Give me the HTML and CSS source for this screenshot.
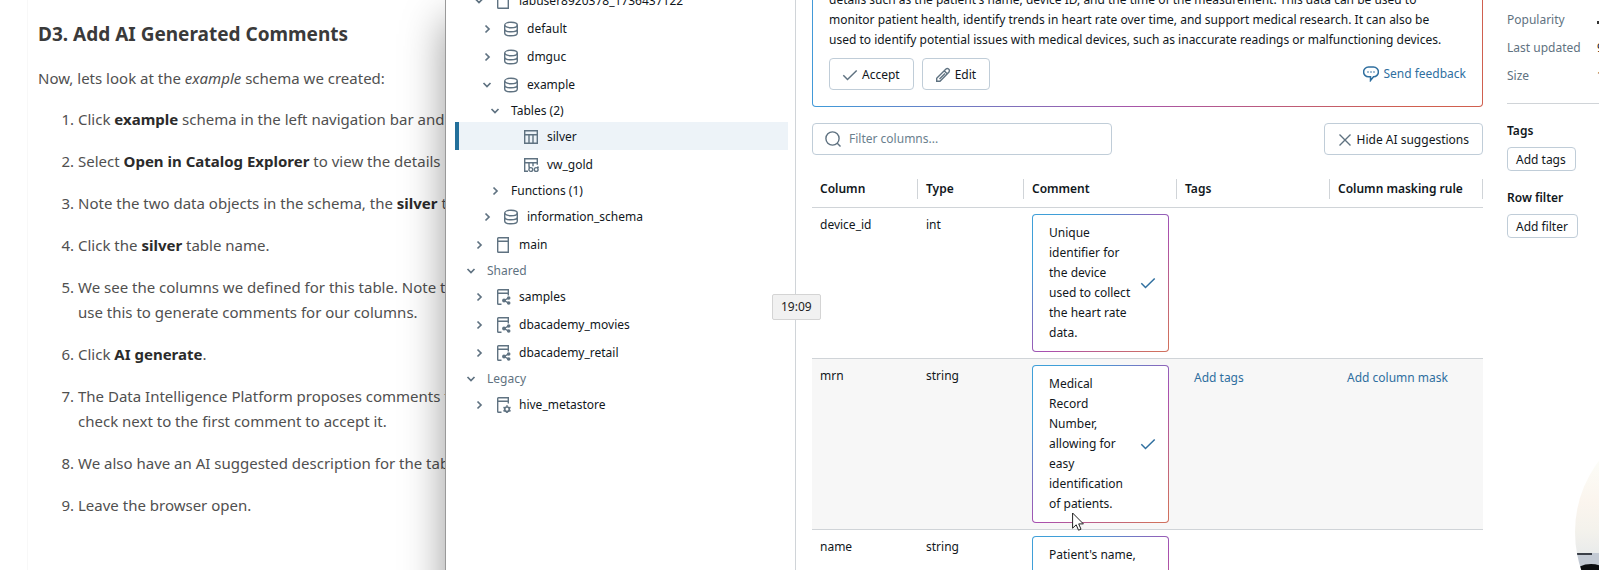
FILE: index.html
```html
<!DOCTYPE html>
<html lang="en">
<head>
<meta charset="utf-8">
<title>Add AI Generated Comments</title>
<link rel="stylesheet" href="styles.css">
</head>
<body>
<svg class="sprite" aria-hidden="true">
  <symbol id="i-right" viewBox="0 0 16 16"><path d="M6.500 4.500L10 8l-3.500 3.500" fill="none" stroke="currentColor" stroke-width="1.700"/></symbol>
  <symbol id="i-down" viewBox="0 0 16 16"><path d="M4.500 6L8 9.500 11.500 6" fill="none" stroke="currentColor" stroke-width="1.700"/></symbol>
  <symbol id="i-db" viewBox="0 0 16 16"><g fill="none" stroke="currentColor" stroke-width="1.400"><ellipse cx="8" cy="4" rx="6.300" ry="2.800"/><path d="M1.700 4v8c0 1.600 2.800 2.800 6.300 2.800s6.300-1.200 6.300-2.800V4M1.700 8c0 1.600 2.800 2.800 6.300 2.800s6.300-1.200 6.300-2.800"/></g></symbol>
  <symbol id="i-cat" viewBox="0 0 16 16"><path d="M2.700 1.500q0-.8.8-.8h9.800v14.600H3.500q-.8 0-.8-.8zM2.700 4.200h10.600" fill="none" stroke="currentColor" stroke-width="1.400"/></symbol>
  <symbol id="i-share" viewBox="0 0 16 16"><path d="M6.500 15.300H3.500q-.8 0-.8-.8v-13q0-.8.8-.8h9.800v5.800M2.700 4.200h10.600M9 11.500l4.300-2.300M9 11.500l4.300 2.300" fill="none" stroke="currentColor" stroke-width="1.400"/><g fill="currentColor"><circle cx="9" cy="11.500" r="1.900"/><circle cx="13.700" cy="9" r="1.800"/><circle cx="13.700" cy="14" r="1.800"/></g></symbol>
  <symbol id="i-gear" viewBox="0 0 16 16"><path d="M6.500 15.300H3.500q-.8 0-.8-.8v-13q0-.8.8-.8h9.800v5.800M2.700 4.200h10.600" fill="none" stroke="currentColor" stroke-width="1.400"/><circle cx="12" cy="12.300" r="2.300" fill="none" stroke="currentColor" stroke-width="1.700"/><path d="M12 8.300v1.500M12 14.800v1.500M8.500 10.300l1.300.8M14.200 13.500l1.300.8M8.500 14.300l1.300-.8M14.200 11.100l1.300-.8" stroke="currentColor" stroke-width="1.600"/></symbol>
  <symbol id="i-table" viewBox="0 0 16 16"><path d="M1.700 1.700h12.600v12.600H1.700zM1.700 5.700h12.600M6 5.700v8.600M10 5.700v8.600" fill="none" stroke="currentColor" stroke-width="1.400"/></symbol>
  <symbol id="i-view" viewBox="0 0 16 16"><g fill="none" stroke="currentColor" stroke-width="1.400"><path d="M5 14.300H1.700V1.700h12.600v6M1.700 5.700h12.600M6 5.700v4M10 5.700v3.500M5.500 10.200h1.500M14 10.200h1.800"/><circle cx="7.800" cy="12.500" r="1.900"/><circle cx="13.200" cy="12.500" r="1.900"/></g></symbol>
  <symbol id="i-check" viewBox="0 0 16 16"><path d="M1.300 8.300l4.200 4.200L14.700 3.500" fill="none" stroke="currentColor" stroke-width="1.500"/></symbol>
  <symbol id="i-pencil" viewBox="0 0 16 16"><path d="M1.700 14.300v-3L11 2q1.200-1.200 2.600 0t.4 3L5 14.300zM9.200 3.800l3 3M4.500 12L10 6.500" fill="none" stroke="currentColor" stroke-width="1.400"/></symbol>
  <symbol id="i-close" viewBox="0 0 16 16"><path d="M2.500 2.500l11 11M13.500 2.500l-11 11" stroke="currentColor" stroke-width="1.400"/></symbol>
  <symbol id="i-search" viewBox="0 0 16 16"><circle cx="7.500" cy="7.500" r="6.600" fill="none" stroke="currentColor" stroke-width="1.400"/><path d="M12 12l3.500 3.500" stroke="currentColor" stroke-width="1.400"/></symbol>
  <symbol id="i-bubble" viewBox="0 0 16 16"><path d="M5.500 1h5a4.800 4.800 0 010 9.800L7.500 14.500v-3.700h-2a4.800 4.800 0 010-9.800z" fill="none" stroke="currentColor" stroke-width="1.500"/><g fill="currentColor"><circle cx="5" cy="6" r=".8"/><circle cx="8" cy="6" r=".8"/><circle cx="11" cy="6" r=".8"/></g></symbol>
</svg>

<div class="screen">
  <article class="lesson">
    <h2>D3. Add AI Generated Comments</h2>
    <p>Now, lets look at the <em>example</em> schema we created:</p>
    <ol>
      <li>Click <strong>example</strong> schema in the left navigation bar and</li>
      <li>Select <strong>Open in Catalog Explorer</strong> to view the details</li>
      <li>Note the two data objects in the schema, the <strong>silver</strong> table</li>
      <li>Click the <strong>silver</strong> table name.</li>
      <li>We see the columns we defined for this table. Note the<br>use this to generate comments for our columns.</li>
      <li>Click <strong>AI generate</strong>.</li>
      <li>The Data Intelligence Platform proposes comments for<br>check next to the first comment to accept it.</li>
      <li>We also have an AI suggested description for the table</li>
      <li>Leave the browser open.</li>
    </ol>
  </article>

  <div class="window">
    <nav class="tree" aria-label="Catalog">
      <ul>
        <li class="row catalog"><svg><use href="#i-down"/></svg><svg><use href="#i-cat"/></svg>labuser8920378_1736437122</li>
        <li class="row schema"><svg><use href="#i-right"/></svg><svg><use href="#i-db"/></svg>default</li>
        <li class="row schema"><svg><use href="#i-right"/></svg><svg><use href="#i-db"/></svg>dmguc</li>
        <li class="row schema"><svg><use href="#i-down"/></svg><svg><use href="#i-db"/></svg>example</li>
        <li class="row folder"><svg><use href="#i-down"/></svg>Tables (2)</li>
        <li class="row item selected"><svg><use href="#i-table"/></svg>silver</li>
        <li class="row item"><svg><use href="#i-view"/></svg>vw_gold</li>
        <li class="row folder"><svg><use href="#i-right"/></svg>Functions (1)</li>
        <li class="row schema"><svg><use href="#i-right"/></svg><svg><use href="#i-db"/></svg>information_schema</li>
        <li class="row catalog"><svg><use href="#i-right"/></svg><svg><use href="#i-cat"/></svg>main</li>
        <li class="row section"><svg><use href="#i-down"/></svg>Shared</li>
        <li class="row catalog"><svg><use href="#i-right"/></svg><svg><use href="#i-share"/></svg>samples</li>
        <li class="row catalog"><svg><use href="#i-right"/></svg><svg><use href="#i-share"/></svg>dbacademy_movies</li>
        <li class="row catalog"><svg><use href="#i-right"/></svg><svg><use href="#i-share"/></svg>dbacademy_retail</li>
        <li class="row section"><svg><use href="#i-down"/></svg>Legacy</li>
        <li class="row catalog"><svg><use href="#i-right"/></svg><svg><use href="#i-gear"/></svg>hive_metastore</li>
      </ul>
    </nav>

    <main>
      <section class="suggestion">
        <p>details such as the patient's name, device ID, and the time of the measurement. This data can be used to<br>monitor patient health, identify trends in heart rate over time, and support medical research. It can also be<br>used to identify potential issues with medical devices, such as inaccurate readings or malfunctioning devices.</p>
        <div class="actions">
          <button class="btn"><svg><use href="#i-check"/></svg>Accept</button>
          <button class="btn"><svg><use href="#i-pencil"/></svg>Edit</button>
          <a class="feedback" href="#"><svg><use href="#i-bubble"/></svg>Send feedback</a>
        </div>
      </section>
      <div class="toolbar">
        <label class="filter"><svg><use href="#i-search"/></svg><input type="text" placeholder="Filter columns..." aria-label="Filter columns"></label>
        <button class="btn"><svg><use href="#i-close"/></svg>Hide AI suggestions</button>
      </div>
      <table>
        <colgroup><col class="c-narrow"><col class="c-narrow"><col><col><col></colgroup>
        <thead>
          <tr><th><span>Column</span></th><th><span>Type</span></th><th><span>Comment</span></th><th><span>Tags</span></th><th><span>Column masking rule</span></th></tr>
        </thead>
        <tbody>
          <tr><td>device_id</td><td>int</td><td class="cell-comment"><div class="comment"><p>Unique<br>identifier for<br>the device<br>used to collect<br>the heart rate<br>data.</p><button aria-label="Accept comment"><svg><use href="#i-check"/></svg></button></div></td><td></td><td></td></tr>
          <tr class="hover"><td>mrn</td><td>string</td><td class="cell-comment"><div class="comment"><p>Medical<br>Record<br>Number,<br>allowing for<br>easy<br>identification<br>of patients.</p><button aria-label="Accept comment"><svg><use href="#i-check"/></svg></button></div></td><td class="cell-link"><a href="#">Add tags</a></td><td class="cell-link"><a href="#">Add column mask</a></td></tr>
          <tr><td>name</td><td>string</td><td class="cell-comment"><div class="comment tall"><p>Patient's name,</p><button aria-label="Accept comment"><svg><use href="#i-check"/></svg></button></div></td><td></td><td></td></tr>
        </tbody>
      </table>
    </main>

    <aside>
      <dl>
        <dt>Popularity</dt><dd><i class="bars"></i></dd>
        <dt>Last updated</dt><dd>9</dd>
        <dt>Size</dt><dd>1</dd>
      </dl>
      <h3>Tags</h3>
      <button class="btn small">Add tags</button>
      <h3>Row filter</h3>
      <button class="btn small">Add filter</button>
    </aside>
  </div>

  <div class="timestamp">19:09</div>
  <svg class="cursor" viewBox="0 0 12 19"><path d="M.600 1v15.200l3.600-3.400 2.300 5.400 2.500-1-2.300-5.300h4.700z" fill="#fff" stroke="#222" stroke-width="1"/></svg>
  <svg class="webcam" viewBox="0 0 24 112">
    <defs>
      <clipPath id="lens"><circle cx="118" cy="74" r="118"/></clipPath>
      <linearGradient id="wall" x1="0" y1="0" x2="0" y2="1"><stop offset="0" stop-color="#fcfdf8"/><stop offset=".45" stop-color="#fbf5ee"/><stop offset=".75" stop-color="#f4f2ec"/><stop offset="1" stop-color="#e9ebeb"/></linearGradient>
    </defs>
    <g clip-path="url(#lens)"><rect width="24" height="96" fill="url(#wall)"/><path d="M0 95h24v17H0z" fill="#c3cad4"/><path d="M0 95h17v2H0z" fill="#3a3f48"/><ellipse cx="16" cy="114" rx="15" ry="8" fill="#0b0d10"/></g>
  </svg>
</div>
</body>
</html>
```
FILE: styles.css
```css
* { box-sizing: border-box; }

body {
  margin: 0;
  font-family: "Noto Sans", "Open Sans", sans-serif;
  font-size: 12px;
  line-height: 20px;
  color: #11171c;
  background: #fff;
}

ul, ol, dl, dd, p, h2, h3 { margin: 0; padding: 0; }
svg { width: 16px; height: 16px; flex: none; color: #5f7281; }
.sprite { display: none; }
a { color: #2f6f9f; text-decoration: none; }
button, input { font: inherit; color: inherit; }

.screen {
  position: relative;
  display: grid;
  grid-template-columns: 445px minmax(0, 1fr);
  height: 100vh;
  overflow: hidden;
}

/* Lesson text */
.lesson {
  margin-left: 27px;
  padding: 18px 0 0 10px;
  border-left: 1px solid #f8f8f8;
  font-size: 15px;
  line-height: 25px;
  color: #505050;
  white-space: nowrap;
}
.lesson h2 { font-size: 19px; line-height: 32px; font-weight: 700; color: #3a3a3a; }
.lesson p { margin: 16px 0; }
.lesson ol { padding-left: 40px; }
.lesson li { margin-bottom: 17px; }
.lesson strong { font-weight: 700; color: #2b2b2b; }

/* Browser window */
.window {
  position: relative;
  display: grid;
  grid-template-columns: 350px minmax(0, 1fr) 92px;
  background: #fff;
  border-left: 1px solid #999;
  box-shadow: 0 20px 40px rgba(0, 0, 0, .4);
}

.tree {
  padding: 0 7px 0 9px;
  border-right: 1px solid #d0d4d8;
}
.tree ul { margin-top: -14px; list-style: none; }
.row { display: flex; align-items: center; gap: 8px; height: 28px; padding-top: 1px; }
.catalog { padding-left: 16px; }
.schema { padding-left: 24px; }
.item { padding-left: 68px; }
.folder { padding-left: 32px; height: 24px; }
.section { padding-left: 8px; height: 24px; color: #5f7281; }
.selected { padding-left: 64px; border-left: 4px solid #23709b; background: #edf3f8; }

main { padding: 0 24px 0 16px; overflow: hidden; }

.suggestion {
  margin-top: -27px;
  padding: 16px;
  border: 1px solid transparent;
  border-radius: 4px;
  background:
    linear-gradient(#fff, #fff) padding-box,
    linear-gradient(100deg, #4299d8 5%, #a855a8 50%, #d0604f 90%) border-box;
}
.suggestion p { white-space: nowrap; }
.actions { display: flex; gap: 8px; margin-top: 8px; align-items: center; }
.feedback { display: flex; align-items: center; gap: 4px; margin-left: auto; }
.feedback svg { color: inherit; }

.btn {
  display: inline-flex;
  align-items: center;
  gap: 4px;
  height: 32px;
  padding: 1px 13px 0 12px;
  border: 1px solid #c0cdd8;
  border-radius: 4px;
  background: #fff;
  white-space: nowrap;
}
.small { height: 24px; padding: 1px 9px 0 8px; }

.toolbar { display: flex; justify-content: space-between; margin: 16px 0; }
.filter {
  display: flex;
  align-items: center;
  gap: 8px;
  width: 300px;
  height: 32px;
  padding: 0 12px;
  border: 1px solid #c0cdd8;
  border-radius: 4px;
}
.filter input { flex: 1; min-width: 0; padding: 0; border: 0; outline: 0; background: none; }
.filter input::placeholder { color: #6b7f8e; }

table { width: 100%; border-collapse: separate; border-spacing: 0; table-layout: fixed; }
.c-narrow { width: 106px; }
th { height: 37px; padding: 0; border-bottom: 1px solid #d0d4d8; text-align: left; font-weight: 600; white-space: nowrap; }
th span { display: block; padding-left: 8px; border-right: 1px solid #d0d4d8; }
td { padding: 7px 8px; border-bottom: 1px solid #d0d4d8; vertical-align: top; }
.cell-comment { padding: 6px 8px; }
.cell-link { padding: 9px 8px 8px 17px; }
.hover { background: #f7f7f7; }

.comment {
  display: flex;
  align-items: center;
  gap: 2px;
  padding: 8px 12px 8px 16px;
  border: 1px solid transparent;
  border-radius: 4px;
  background:
    linear-gradient(#fff, #fff) padding-box,
    linear-gradient(135deg, #3f9fd8 20%, #a94fb0 55%, #d0705f 95%) border-box;
}
.comment p { flex: 1; min-width: 0; white-space: nowrap; }
.comment button { display: flex; padding: 0; border: 0; background: none; }
.comment svg { color: #2f6f9f; }
.tall p { min-height: 120px; }

aside { overflow: hidden; }
dl {
  display: grid;
  grid-template-columns: 82px 40px;
  gap: 8px;
  width: 130px;
  padding: 10px 0 17px;
  border-bottom: 1px solid #d0d4d8;
  color: #5f7281;
}
dd { color: #11171c; }
.bars { display: block; width: 3px; height: 3px; margin-top: 11px; background: #333; }
h3 { margin: 17px 0 6px; font-size: 12px; line-height: 20px; font-weight: 600; }

/* Overlays */
.timestamp {
  position: absolute;
  left: 772px;
  top: 294px;
  padding: 2px 8px;
  border: 1px solid #d4d4d4;
  border-radius: 2px;
  background: #f1f1f1;
  color: #222;
}
.cursor { position: absolute; left: 1072px; top: 512px; width: 12px; height: 19px; }
.webcam { position: absolute; right: 0; bottom: 0; width: 24px; height: 112px; }
```
